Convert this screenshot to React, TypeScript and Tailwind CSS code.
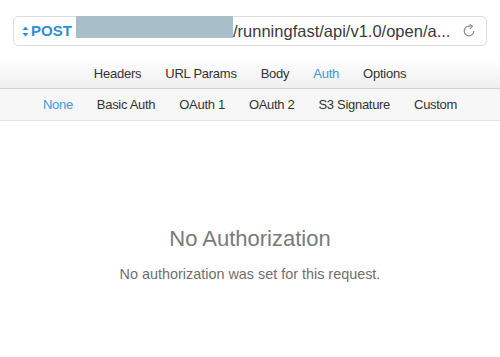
export default function App() {
  const tabs = ["Headers", "URL Params", "Body", "Auth", "Options"];
  const auths = ["None", "Basic Auth", "OAuth 1", "OAuth 2", "S3 Signature", "Custom"];
  return (
    <div className="w-[500px] h-[357px] bg-white flex flex-col font-['Liberation_Sans',Arial,sans-serif]">
      <div className="px-[13px] pt-[16px] pb-[12px]">
        <div className="h-[30px] border border-[#dcdcdc] rounded-[5px] flex items-center relative">
          <div className="flex items-center pl-[8px] w-[62px] text-[#2d8fd5] font-bold text-[15px]">
            <svg width="7" height="11" viewBox="0 0 7 11" className="mr-[2px]">
              <path d="M3.5 0.5 L6.5 4 L0.5 4 Z" fill="#2d8fd5" />
              <path d="M3.5 10.5 L6.5 7 L0.5 7 Z" fill="#2d8fd5" />
            </svg>
            POST
          </div>
          <div className="w-[157px] h-[22px] bg-[#a8bec8] self-start -mt-[1px]" />
          <span className="text-[16.5px] text-[#3a3a3a]">/runningfast/api/v1.0/open/a...</span>
          <svg width="16" height="16" viewBox="0 0 16 16" className="absolute right-[9px] top-[6px]" fill="none" stroke="#8a8a8a" strokeWidth="1.2">
            <path d="M12.8 8 A4.8 4.8 0 1 1 9.6 3.5" />
            <path d="M8.8 1.3 L11.3 3.6 L8.8 5.9" />
          </svg>
        </div>
      </div>
      <div className="h-[31px] bg-gradient-to-b from-white to-[#efefef] border-b border-[#d2d2d2] flex items-center justify-center gap-[24px] text-[13px] text-[#333] tracking-[-0.25px] pt-[1px]">
        {tabs.map((t) => (
          <span key={t} className={t === "Auth" ? "text-[#3a99dd]" : ""}>{t}</span>
        ))}
      </div>
      <div className="h-[32px] bg-[#f7f7f7] border-b border-[#e3e3e3] flex items-center justify-center gap-[24px] text-[13px] text-[#333] tracking-[-0.3px]">
        {auths.map((t) => (
          <span key={t} className={t === "None" ? "text-[#3a99dd]" : ""}>{t}</span>
        ))}
      </div>
      <div className="flex-1 flex flex-col items-center pt-[104px]">
        <div className="text-[22px] text-[#7a7a7a] leading-[28px]">No Authorization</div>
        <div className="text-[14.4px] text-[#6e6e6e] mt-[11px]">No authorization was set for this request.</div>
      </div>
    </div>
  );
}
